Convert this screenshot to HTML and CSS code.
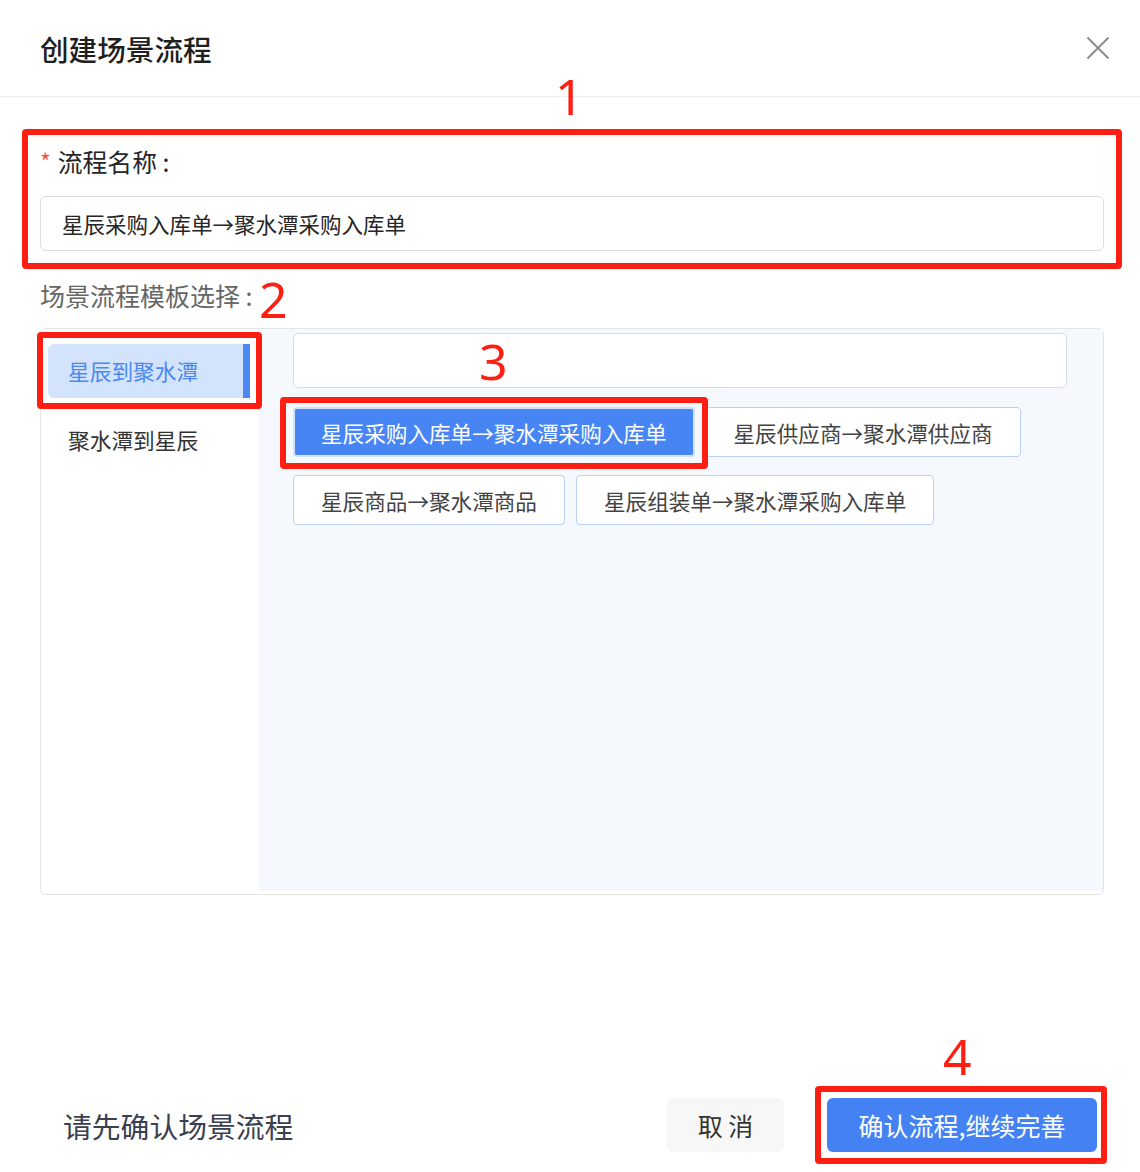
FILE: index.html
```html
<!DOCTYPE html>
<html lang="zh-CN">
  <head>
    <meta charset="UTF-8" />
    <meta name="viewport" content="width=device-width, initial-scale=1.0" />
    <title>创建场景流程</title>
    <link rel="stylesheet" href="styles.css">
  </head>
  <body>
    <div class="dialog">
      <div class="header">
        <h2 class="title">创建场景流程</h2>
        <button class="close" aria-label="关闭">
          <svg width="24" height="24" viewBox="0 0 24 24">
            <path d="M1.5 1.5 L22.5 22.5 M22.5 1.5 L1.5 22.5" stroke="#8c8c8c" stroke-width="2" fill="none" />
          </svg>
        </button>
      </div>

      <div class="body">
        <div class="field-label"><span class="star">*</span>流程名称 :</div>
        <div class="input">星辰采购入库单→聚水潭采购入库单</div>

        <div class="section-label">场景流程模板选择 :</div>
        <div class="picker">
          <div class="menu">
            <div class="menu-item active">星辰到聚水潭</div>
            <div class="menu-item">聚水潭到星辰</div>
          </div>
          <div class="pane">
            <div class="search"></div>
            <div class="options">
              <button class="option selected">星辰采购入库单→聚水潭采购入库单</button>
              <button class="option">星辰供应商→聚水潭供应商</button>
              <button class="option">星辰商品→聚水潭商品</button>
              <button class="option">星辰组装单→聚水潭采购入库单</button>
            </div>
          </div>
        </div>
      </div>

      <div class="footer">
        <div class="hint">请先确认场景流程</div>
        <div class="actions">
          <button class="btn btn-cancel">取 消</button>
          <button class="btn btn-primary">确认流程,继续完善</button>
        </div>
      </div>

      <!-- annotations -->
      <div class="mark mark-1"></div>
      <div class="mark mark-2"></div>
      <div class="mark mark-3"></div>
      <div class="mark mark-4"></div>
      <span class="num num-1">1</span>
      <span class="num num-2">2</span>
      <span class="num num-3">3</span>
      <span class="num num-4">4</span>
    </div>
  </body>
</html>
```

FILE: styles.css
```css
body {
  margin: 0;
  background: #fff;
  font-family: "Noto Sans CJK SC", "Noto Sans", sans-serif;
  color: #333;
}
.dialog {
  position: relative;
  width: 1140px;
  height: 1172px;
  display: flex;
  flex-direction: column;
  overflow: hidden;
}
.header {
  height: 97px;
  border-bottom: 1px solid #eeeeee;
  display: flex;
  align-items: center;
  justify-content: space-between;
  padding: 0 30px 0 40px;
  box-sizing: border-box;
}
.title {
  margin: 0;
  font-size: 28.6px;
  font-weight: 500;
  color: #1f1f1f;
}
.close {
  border: none;
  background: none;
  padding: 0;
  width: 24px;
  height: 24px;
  cursor: pointer;
}
.body {
  flex: 1;
  padding: 0 36px 0 40px;
}
.field-label {
  margin-top: 49px;
  height: 30px;
  line-height: 30px;
  font-size: 24.8px;
  color: #262626;
}
.star {
  color: #f5504a;
  font-size: 23px;
  margin-right: 7px;
  vertical-align: top;
}
.input {
  margin-top: 20px;
  height: 53px;
  line-height: 53px;
  border: 1px solid #dcdcdc;
  border-radius: 6px;
  padding: 0 21px;
  font-size: 21.5px;
  color: #262626;
}
.section-label {
  margin-top: 29px;
  height: 30px;
  line-height: 30px;
  font-size: 25px;
  color: #666;
}
.picker {
  margin-top: 18px;
  height: 565px;
  border: 1px solid #e4e4e4;
  border-radius: 6px;
  display: flex;
}
.menu {
  width: 217px;
  padding: 15px 0 0 7px;
  box-sizing: border-box;
}
.menu-item {
  width: 202px;
  height: 54px;
  line-height: 54px;
  padding-left: 20px;
  box-sizing: border-box;
  font-size: 21.7px;
  color: #333;
  margin-bottom: 15px;
  border-radius: 6px 0 0 6px;
}
.menu-item.active {
  background: #d3e3fb;
  color: #4a89f3;
  border-right: 7px solid #4a89f3;
}
.pane {
  flex: 1;
  background: #f5f8fc;
  margin-bottom: 3px;
  padding: 4px 36px 0 35px;
}
.search {
  height: 53px;
  background: #fff;
  border: 1px solid #dcdcdc;
  border-radius: 6px;
}
.options {
  margin-top: 19px;
  display: flex;
  flex-wrap: wrap;
  gap: 18px 11px;
}
.option {
  height: 50px;
  padding: 0 27px;
  font-family: inherit;
  font-size: 21.6px;
  color: #444;
  background: #fff;
  border: 1px solid #bcd0f4;
  border-radius: 4px;
  cursor: pointer;
}
.option.selected {
  background: #4785f5;
  color: #fff;
  border-color: #d3e3fb;
  box-shadow: inset 0 0 0 1px #d3e3fb;
}
.footer {
  height: 54px;
  padding: 0 43px 20px 63px;
  display: flex;
  align-items: center;
  justify-content: space-between;
}
.hint {
  font-size: 28.8px;
  color: #3a4050;
}
.actions {
  display: flex;
  gap: 43px;
}
.btn {
  height: 54px;
  border: none;
  border-radius: 6px;
  font-family: inherit;
  font-size: 25px;
  cursor: pointer;
}
.btn-cancel {
  width: 117px;
  background: #f7f7f7;
  color: #333;
}
.btn-primary {
  width: 270px;
  background: #4482f4;
  color: #fff;
}

/* red annotations drawn over the screenshot */
.mark {
  position: absolute;
  border: 6px solid #ff1e12;
  border-radius: 4px;
  box-sizing: border-box;
}
.mark-1 {
  left: 22px;
  top: 129px;
  width: 1100px;
  height: 140px;
}
.mark-2 {
  left: 37px;
  top: 332px;
  width: 225px;
  height: 77px;
}
.mark-3 {
  left: 280px;
  top: 397px;
  width: 428px;
  height: 72px;
}
.mark-4 {
  left: 815px;
  top: 1086px;
  width: 292px;
  height: 78px;
}
.num {
  position: absolute;
  font-family: "Noto Sans", sans-serif;
  font-size: 50px;
  line-height: 1;
  color: #ff1e12;
}
.num-1 {
  left: 555px;
  top: 71px;
}
.num-2 {
  left: 259px;
  top: 274px;
}
.num-3 {
  left: 479px;
  top: 336px;
}
.num-4 {
  left: 943px;
  top: 1031px;
}
```
